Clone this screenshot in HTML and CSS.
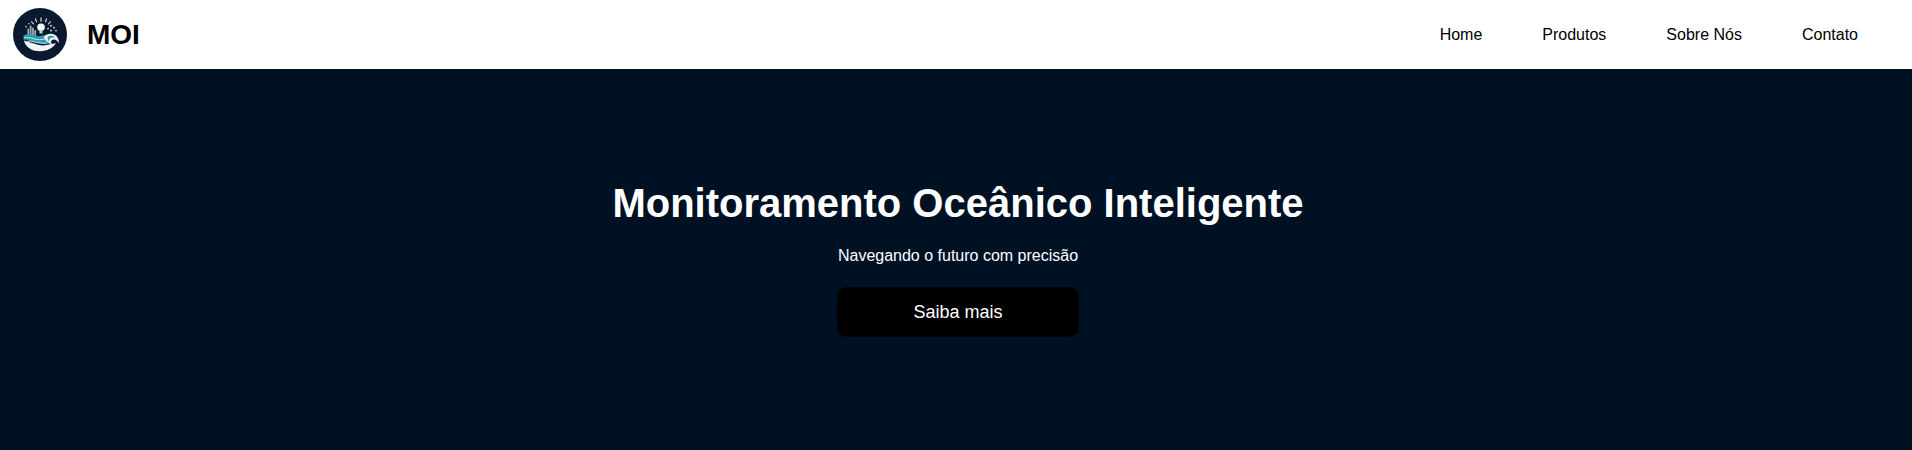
FILE: index.html
```html
<!DOCTYPE html>
<html lang="pt">
<head>
<meta charset="utf-8">
<title>MOI</title>
<link rel="stylesheet" href="styles.css">
</head>
<body>
<header class="topbar">
  <div class="brand">
    <svg class="logo" viewBox="0 0 54 54" preserveAspectRatio="none" aria-hidden="true">
      <circle cx="27" cy="27" r="27" fill="#0a1830"/>
      <g stroke="#e6ecef" stroke-width="1.100" fill="none" stroke-linecap="round">
        <path d="M28 10v3.500M22.500 11l1 3M33.500 11l-1 3M18.500 14l2 2.200M37.500 14l-2 2.200"/>
      </g>
      <circle cx="28" cy="19.500" r="3.800" fill="#f6f8f8"/>
      <rect x="26.500" y="22.500" width="3" height="3.500" fill="#c2ccd2"/>
      <g fill="#a3b0ba">
        <rect x="14.500" y="21" width="1.700" height="9"/>
        <rect x="16.800" y="18" width="1.700" height="12"/>
        <rect x="19.100" y="20" width="1.700" height="10"/>
        <rect x="21.400" y="22.500" width="1.700" height="7.500"/>
      </g>
      <g fill="#c8d2d8">
        <circle cx="35" cy="21" r="1"/><circle cx="38" cy="18" r="1"/><circle cx="41" cy="20" r="1"/><circle cx="43" cy="23" r=".9"/><circle cx="38" cy="23" r="1"/><circle cx="13" cy="19" r=".8"/><circle cx="16" cy="16" r=".8"/>
      </g>
      <path d="M11 33c1 6 7 11 16 11 7 0 13-3 16-8l-6 1c-6 2-12 1-17-1-3-1-6-2-9-3z" fill="#f1f5f5"/>
      <path d="M10.500 28c5-2 8-1 11 0 4 1 7 1 10-1 0 3 1 5 3 7l3 2c-6 1-11 0-16-1-4-1-7-3-11-3z" fill="#2d9dad"/>
      <path d="M11 30.500c4-1 7 0 10 1 4 1 7 1 11 0M14 34c3-.5 6 0 9 1 4 1 7 1 11 1" stroke="#bfe6ea" stroke-width="1" fill="none"/>
      <path d="M31 29c3-3 8-4 12-1 2 2 3 5 3 8-1-2-3-4-5-4-2 0-3 1-3 3l1 2c-4-1-7-4-8-8z" fill="#eef2f2"/>
      <path d="M35 29c2-1 5-1 7 1-2 0-4 0-5 1-1 1-1 2-1 3-1-1-2-3-1-5z" fill="#2d9dad"/>
    </svg>
    <span class="brand-name">MOI</span>
  </div>
  <nav class="nav">
    <a href="#">Home</a>
    <a href="#">Produtos</a>
    <a href="#">Sobre Nós</a>
    <a href="#">Contato</a>
  </nav>
</header>
<main class="hero">
  <h1>Monitoramento Oceânico Inteligente</h1>
  <p>Navegando o futuro com precisão</p>
  <a class="cta" href="#">Saiba mais</a>
</main>
</body>
</html>
```
FILE: styles.css
```css
* { box-sizing: border-box; }
html, body { height: 100%; }
body {
  margin: 0;
  display: flex;
  flex-direction: column;
  font-family: "Liberation Sans", Arial, sans-serif;
  overflow: hidden;
}
.topbar {
  height: 69px;
  flex: none;
  display: flex;
  align-items: center;
  justify-content: space-between;
  padding: 0 54px 0 13px;
  background: #fff;
}
.brand { display: flex; align-items: center; gap: 20px; }
.logo { width: 54px; height: 53px; display: block; margin-bottom: 1px; }
.brand-name { font-size: 28px; font-weight: 700; color: #000; }
.nav { display: flex; gap: 60px; }
.nav a { font-size: 16px; color: #000; text-decoration: none; }
.hero {
  flex: 1;
  display: flex;
  flex-direction: column;
  align-items: center;
  justify-content: center;
  background: #001124;
  color: #fff;
  padding: 0 0 2px 4px;
}
.hero h1 { margin: 0 0 21px; font-size: 40px; font-weight: 700; line-height: 46px; }
.hero p { margin: 0 0 22px; font-size: 16px; line-height: 18px; }
.cta {
  width: 242px;
  height: 50px;
  display: flex;
  align-items: center;
  justify-content: center;
  background: #000;
  color: #fff;
  font-size: 18px;
  text-decoration: none;
  border-radius: 10px;
}
```
